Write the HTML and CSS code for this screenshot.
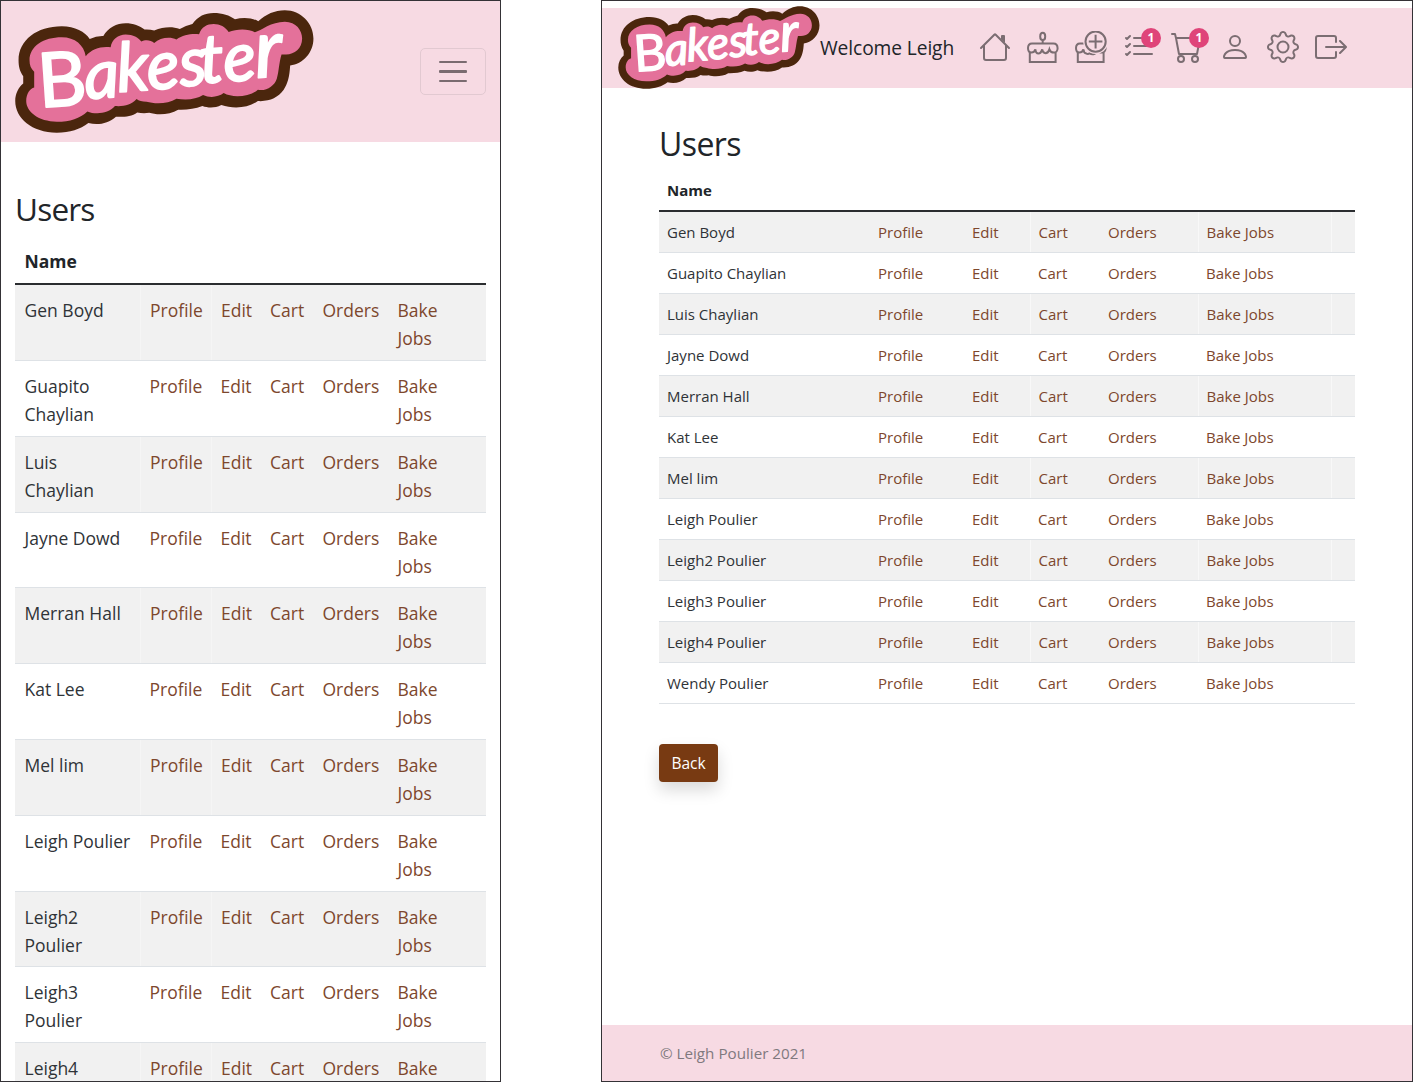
FILE: index.html
```html
<!DOCTYPE html>
<html lang="en">
<head>
<meta charset="utf-8">
<title>Bakester - Users</title>
<link rel="stylesheet" href="styles.css">
</head>
<body>
<svg class="defs" aria-hidden="true">
  <symbol id="logo" viewBox="45 29 898 370">
    <path fill="#4b260d" d="M55 180C55 120 110 78 185 78C225 78 255 95 269 116Q290 106 310 107C325 82 350 69 377 69C400 69 420 77 434 88Q450 87 463 91C490 80 515 78 540 86Q557 76 578 71C595 48 615 38 642 38C668 38 690 45 706 57C730 50 758 52 776 63C800 42 825 30 856 30C905 30 942 70 942 115C942 158 910 192 872 196C870 230 865 250 852 270C835 293 810 305 775 303C745 325 700 327 665 315C645 325 625 324 608 318C585 327 560 330 535 329C510 345 470 345 448 338Q430 341 412 337C395 350 370 351 348 350C325 370 295 377 265 369C240 388 210 398 170 398C95 398 45 355 45 303C45 280 55 262 69 250L69 228C58 212 55 198 55 180Z"/>
    <path fill="#e4719a" d="M88 180C88 138 130 111 185 111C225 111 252 135 257 168C275 145 305 137 332 141C335 118 355 103 377 103C400 103 415 112 424 124C435 118 452 118 463 128C480 113 510 108 530 118C550 103 575 100 598 102C605 80 622 71 642 71C660 71 678 80 687 95C710 86 745 84 766 96C785 90 815 64 856 64C890 64 908 90 908 115C908 145 885 163 860 163L846 163C838 190 838 215 832 235C825 258 800 274 775 269C750 290 700 295 672 279C655 292 630 294 610 285C590 298 560 301 530 296C505 312 465 312 440 305Q420 305 410 297C395 315 370 320 345 318C325 342 285 344 262 334C240 355 210 365 170 365C115 365 78 335 78 303C78 280 90 265 102 262L102 215C92 205 88 195 88 180Z"/>
    <text class="logo-text" rotate="-4"><tspan class="logo-b" x="118" y="322">B</tspan><tspan x="257 355 445 543 604 675" y="297 276 269 258 249 245">akeste</tspan><tspan class="logo-r" x="770" y="233">r</tspan></text>
  </symbol>
  <symbol id="house" viewBox="0 0 16 16"><path d="M2 13.5V7h1v6.5a.5.5 0 0 0 .5.5h9a.5.5 0 0 0 .5-.5V7h1v6.5a1.5 1.5 0 0 1-1.5 1.5h-9A1.5 1.5 0 0 1 2 13.5zm11-11V6l-2-2V2.500a.5.5 0 0 1 .5-.5h1a.5.5 0 0 1 .5.5z"/><path d="M7.293 1.5a1 1 0 0 1 1.414 0l6.647 6.646a.5.5 0 0 1-.708.708L8 2.207 1.354 8.854a.5.5 0 1 1-.708-.708L7.293 1.5z"/></symbol>
  <symbol id="cake" viewBox="0 0 16 16"><g fill="none" stroke="currentColor" stroke-width="1"><ellipse cx="7.85" cy="2.700" rx="1.250" ry="1.800"/><path d="M7.850 4.500V6.200M1.400 10.500V15.500H14.300V10.500M2.500 6.200H13.200C14.700 6.200 15.300 7.300 15.300 8.600C15.300 9.800 14.500 10.800 13.500 10.800C12.300 10.800 11.500 10.100 11.200 9.200C10.800 10.500 10 11.100 9.200 11.100C8.400 11.100 7.800 10.300 7.600 9.200C7.200 10.500 6.500 11.300 5.700 11.300C4.800 11.300 4.300 10.300 4.200 9.200C3.800 10.300 3.100 10.800 2.200 10.800C1.200 10.800 .500 9.800 .500 8.500C.500 7.200 1.200 6.200 2.500 6.200Z"/></g></symbol>
  <symbol id="cake-plus" viewBox="0 0 16 16"><mask id="ring"><path fill="#fff" d="M0 0H16V16H0Z"/><circle cx="10.300" cy="5.300" r="6.200" fill="#000"/></mask><g fill="none" stroke="currentColor" stroke-width="1"><path mask="url(#ring)" d="M1.400 10.500V15.500H14.300V10.500M2.500 6.200H13.200C14.700 6.200 15.300 7.300 15.300 8.600C15.300 9.800 14.500 10.800 13.500 10.800C12.300 10.800 11.500 10.100 11.200 9.200C10.800 10.500 10 11.500 9.200 11.600C8.400 11.700 7.800 11.500 7.300 11.200C6.800 11.500 6.300 11.600 5.700 11.300C4.800 11.100 4.300 10.300 4.200 9.200C3.800 10.300 3.100 10.800 2.200 10.800C1.200 10.800 .500 9.800 .500 8.500C.500 7.200 1.200 6.200 2.500 6.200Z"/><circle cx="10.300" cy="5.300" r="5.050"/><path d="M10.300 1.900V8.700M6.900 5.300H13.700"/></g></symbol>
  <symbol id="list" viewBox="0 0 16 16"><path d="M5 11.500a.5.5 0 0 1 .5-.5h9a.5.5 0 0 1 0 1h-9a.5.5 0 0 1-.5-.5zm0-4a.5.5 0 0 1 .5-.5h9a.5.5 0 0 1 0 1h-9a.5.5 0 0 1-.5-.5zm0-4a.5.5 0 0 1 .5-.5h9a.5.5 0 0 1 0 1h-9a.5.5 0 0 1-.5-.5zM3.854 2.146a.5.5 0 0 1 0 .708l-1.500 1.500a.5.5 0 0 1-.708 0l-.5-.5a.5.5 0 1 1 .708-.708L2 3.293l1.146-1.147a.5.5 0 0 1 .708 0zm0 4a.5.5 0 0 1 0 .708l-1.500 1.500a.5.5 0 0 1-.708 0l-.5-.5a.5.5 0 1 1 .708-.708L2 7.293l1.146-1.147a.5.5 0 0 1 .708 0zm0 4a.5.5 0 0 1 0 .708l-1.500 1.500a.5.5 0 0 1-.708 0l-.5-.5a.5.5 0 0 1 .708-.708l.146.147 1.146-1.147a.5.5 0 0 1 .708 0z"/></symbol>
  <symbol id="cart" viewBox="0 0 16 16"><path d="M0 1.500A.5.5 0 0 1 .5 1H2a.5.5 0 0 1 .485.379L2.890 3H14.500a.5.5 0 0 1 .491.592l-1.500 8A.5.5 0 0 1 13 12H4a.5.5 0 0 1-.491-.408L2.010 3.607 1.610 2H.5a.5.5 0 0 1-.5-.5zM3.102 4l1.313 7h8.170l1.313-7H3.102zM5 12a2 2 0 1 0 0 4 2 2 0 0 0 0-4zm7 0a2 2 0 1 0 0 4 2 2 0 0 0 0-4zm-7 1a1 1 0 1 1 0 2 1 1 0 0 1 0-2zm7 0a1 1 0 1 1 0 2 1 1 0 0 1 0-2z"/></symbol>
  <symbol id="person" viewBox="0 0 16 16"><path d="M8 8a3 3 0 1 0 0-6 3 3 0 0 0 0 6zm2-3a2 2 0 1 1-4 0 2 2 0 0 1 4 0zm4 8c0 1-1 1-1 1H3s-1 0-1-1 1-4 6-4 6 3 6 4zm-1-.004c-.001-.246-.154-.986-.832-1.664C11.516 10.680 10.289 10 8 10c-2.290 0-3.516.680-4.168 1.332-.678.678-.830 1.418-.832 1.664h10z"/></symbol>
  <symbol id="gear" viewBox="0 0 16 16"><path d="M8 4.754a3.246 3.246 0 1 0 0 6.492 3.246 3.246 0 0 0 0-6.492zM5.754 8a2.246 2.246 0 1 1 4.492 0 2.246 2.246 0 0 1-4.492 0z"/><path d="M9.796 1.343c-.527-1.790-3.065-1.790-3.592 0l-.094.319a.873.873 0 0 1-1.255.520l-.292-.160c-1.640-.892-3.433.902-2.540 2.541l.159.292a.873.873 0 0 1-.520 1.255l-.319.094c-1.790.527-1.790 3.065 0 3.592l.319.094a.873.873 0 0 1 .520 1.255l-.160.292c-.892 1.640.901 3.434 2.541 2.540l.292-.159a.873.873 0 0 1 1.255.520l.094.319c.527 1.790 3.065 1.790 3.592 0l.094-.319a.873.873 0 0 1 1.255-.520l.292.160c1.640.893 3.434-.902 2.540-2.541l-.159-.292a.873.873 0 0 1 .520-1.255l.319-.094c1.790-.527 1.790-3.065 0-3.592l-.319-.094a.873.873 0 0 1-.520-1.255l.160-.292c.893-1.640-.902-3.433-2.541-2.540l-.292.159a.873.873 0 0 1-1.255-.520l-.094-.319zm-2.633.283c.246-.835 1.428-.835 1.674 0l.094.319a1.873 1.873 0 0 0 2.693 1.115l.291-.160c.764-.415 1.600.420 1.184 1.185l-.159.292a1.873 1.873 0 0 0 1.116 2.692l.318.094c.835.246.835 1.428 0 1.674l-.319.094a1.873 1.873 0 0 0-1.115 2.693l.160.291c.415.764-.420 1.600-1.185 1.184l-.291-.159a1.873 1.873 0 0 0-2.693 1.116l-.094.318c-.246.835-1.428.835-1.674 0l-.094-.319a1.873 1.873 0 0 0-2.692-1.115l-.292.160c-.764.415-1.600-.420-1.184-1.185l.159-.291A1.873 1.873 0 0 0 1.945 8.930l-.319-.094c-.835-.246-.835-1.428 0-1.674l.319-.094A1.873 1.873 0 0 0 3.060 4.377l-.160-.292c-.415-.764.420-1.600 1.185-1.184l.292.159a1.873 1.873 0 0 0 2.692-1.115l.094-.319z"/></symbol>
  <symbol id="logout" viewBox="0 0 16 16"><path d="M10 12.500a.5.5 0 0 1-.5.5h-8a.5.5 0 0 1-.5-.5v-9a.5.5 0 0 1 .5-.5h8a.5.5 0 0 1 .5.5v2a.5.5 0 0 0 1 0v-2A1.500 1.500 0 0 0 9.500 2h-8A1.500 1.500 0 0 0 0 3.500v9A1.500 1.500 0 0 0 1.500 14h8a1.500 1.500 0 0 0 1.500-1.500v-2a.5.5 0 0 0-1 0v2z"/><path d="M15.854 8.354a.5.5 0 0 0 0-.708l-3-3a.5.5 0 0 0-.708.708L14.293 7.500H5.500a.5.5 0 0 0 0 1h8.793l-2.147 2.146a.5.5 0 0 0 .708.708l3-3z"/></symbol>
</svg>

<main class="screens">
  <section class="screen mobile">
    <header class="navbar">
      <svg class="logo" role="img" aria-label="Bakester"><use href="#logo"/></svg>
      <button class="toggler" aria-label="Menu"><span></span><span></span><span></span></button>
    </header>
    <div class="content">
      <h1>Users</h1>
      <table class="users">
        <colgroup><col class="c-name"><col class="c-profile"><col class="c-edit"><col class="c-cart"><col class="c-orders"><col class="c-jobs"><col></colgroup>
        <thead><tr><th colspan="7">Name</th></tr></thead>
        <tbody></tbody>
      </table>
    </div>
  </section>

  <section class="screen desktop">
    <header class="navbar">
      <svg class="logo" role="img" aria-label="Bakester"><use href="#logo"/></svg>
      <span class="welcome">Welcome Leigh</span>
      <nav class="icons">
        <a><svg><use href="#house"/></svg></a>
        <a><svg><use href="#cake"/></svg></a>
        <a><svg><use href="#cake-plus"/></svg></a>
        <a><svg><use href="#list"/></svg><b class="badge">1</b></a>
        <a><svg><use href="#cart"/></svg><b class="badge">1</b></a>
        <a><svg><use href="#person"/></svg></a>
        <a><svg><use href="#gear"/></svg></a>
        <a><svg><use href="#logout"/></svg></a>
      </nav>
    </header>
    <div class="content">
      <h1>Users</h1>
      <table class="users">
        <colgroup><col class="c-name"><col class="c-profile"><col class="c-edit"><col class="c-cart"><col class="c-orders"><col class="c-jobs"><col></colgroup>
        <thead><tr><th colspan="7">Name</th></tr></thead>
        <tbody></tbody>
      </table>
      <button class="back">Back</button>
    </div>
    <footer class="footer">© Leigh Poulier 2021</footer>
  </section>
</main>
<script src="users.js"></script>
</body>
</html>
```
FILE: users.js
```js
const users = ["Gen Boyd", "Guapito Chaylian", "Luis Chaylian", "Jayne Dowd", "Merran Hall", "Kat Lee",
  "Mel lim", "Leigh Poulier", "Leigh2 Poulier", "Leigh3 Poulier", "Leigh4 Poulier", "Wendy Poulier"];
const actions = ["Profile", "Edit", "Cart", "Orders", "Bake Jobs"];

document.querySelectorAll(".users tbody").forEach((body) => {
  users.forEach((name) => {
    const row = body.insertRow();
    row.insertCell().textContent = name;
    actions.forEach((action) => {
      const link = document.createElement("a");
      link.textContent = action;
      row.insertCell().append(link);
    });
    row.insertCell();
  });
});
```
FILE: styles.css
```css
* { box-sizing: border-box; }
body {
  margin: 0;
  background: #fff;
  color: #212529;
  font: 400 16px/24px "Open Sans", "Noto Sans", sans-serif;
}
.defs { position: absolute; width: 0; height: 0; }
.logo-text {
  font: italic 400 204px Lato, sans-serif;
  fill: #fff;
  stroke: #fff;
  stroke-width: 6;
  stroke-linejoin: round;
}
.logo-b { font-size: 226px; font-style: normal; }
.logo-r { font-size: 244px; }
.screens { display: flex; justify-content: space-between; height: 1082px; overflow: hidden; }
.screen {
  display: flex;
  flex-direction: column;
  height: 1082px;
  border: 1px solid #343236;
  overflow: hidden;
}
.navbar { display: flex; align-items: center; flex: none; background: #f7dae3; }
h1 { margin: 0; font-weight: 400; }
.users { width: 100%; table-layout: fixed; border-collapse: collapse; }
.users th { text-align: left; font-weight: 700; border-bottom: 2px solid #2b2d30; }
.users td { vertical-align: top; border-bottom: 1px solid #dee2e6; color: #2f3337; }
.users tbody tr:nth-child(odd) { background: #f1f1f1; }
.users a { color: #7d472d; }

.mobile { width: 501px; }
.mobile .navbar { height: 141px; padding: 0 14px; justify-content: space-between; align-items: flex-start; }
.mobile .logo { width: 299px; height: 123px; margin-top: 9px; }
.toggler {
  display: flex;
  flex-direction: column;
  align-items: center;
  justify-content: center;
  gap: 7px;
  width: 66px;
  height: 47px;
  margin-top: 47px;
  padding: 0;
  border: 1px solid #e2c9d1;
  border-radius: 5px;
  background: none;
}
.toggler span { width: 28px; height: 2.400px; border-radius: 1px; background: #7a6b70; }
.mobile .content { padding: 45px 14px 0; }
.mobile h1 { font-size: 31.500px; line-height: 44px; letter-spacing: -.8px; }
.mobile .users { font-size: 17.500px; line-height: 28px; margin-top: 6px; }
.mobile th { padding: 9px 9.500px 8px; height: 47px; }
.mobile td { height: 76px; padding: 11px 9px 7px 9.500px; }
.mobile td:first-child { padding-right: 4px; }
.mobile tr:nth-child(3) td:first-child { padding-right: 20px; }
.mobile tr:nth-child(5n+4) td { height: 75px; padding-bottom: 6px; }
.mobile tr:nth-child(odd) td:nth-child(-n+2) { border-right: 1px solid #f5f5f5; }
.mobile .c-name { width: 125px; }
.mobile .c-profile { width: 71px; }
.mobile .c-edit { width: 49.500px; }
.mobile .c-cart { width: 52.500px; }
.mobile .c-orders { width: 75px; }
.mobile .c-jobs { width: 70px; }

.desktop { width: 812px; }
.desktop .navbar { height: 80px; margin-top: 6.500px; padding-left: 16px; }
.desktop .logo { width: 202px; height: 83px; margin-top: -1px; }
.welcome { width: 159px; font-size: 19.200px; letter-spacing: -.1px; white-space: nowrap; }
.icons { display: flex; gap: 16px; margin-top: -2px; color: #7b6d72; }
.icons a { position: relative; width: 32px; height: 32px; }
.icons svg { display: block; width: 32px; height: 32px; fill: currentColor; }
.badge {
  position: absolute;
  left: 18px;
  top: -3px;
  width: 20px;
  height: 20px;
  border-radius: 50%;
  background: #df4479;
  color: #fff;
  font-size: 12px;
  line-height: 20px;
  text-align: center;
}
.desktop .content { flex: 1; padding: 35px 57px 0; }
.desktop h1 { font-size: 32px; line-height: 42px; letter-spacing: -.6px; }
.desktop .users { font-size: 15px; margin-top: 5px; }
.desktop th { padding: 8px 8px 7px; height: 41px; }
.desktop td { height: 41px; padding: 8px; white-space: nowrap; }
.desktop tr:nth-child(odd) td:is(:nth-child(3), :nth-child(5), :nth-child(6)) { border-right: 1px solid #f8f8f8; }
.desktop .c-name { width: 211px; }
.desktop .c-profile { width: 94px; }
.desktop .c-edit { width: 66px; }
.desktop .c-cart { width: 70px; }
.desktop .c-orders { width: 98px; }
.desktop .c-jobs { width: 133px; }
.back {
  display: block;
  width: 59px;
  height: 38px;
  margin-top: 40px;
  padding: 0;
  border: 0;
  border-radius: 4px;
  background: #783a12;
  box-shadow: 0 8px 16px rgba(0, 0, 0, .15);
  color: #fff;
  font: 400 15.500px/38px "Open Sans", sans-serif;
}
.footer {
  flex: none;
  height: 56px;
  padding: 0 58px;
  background: #f7dae3;
  color: #80797e;
  font-size: 15.200px;
  line-height: 57px;
}
```
